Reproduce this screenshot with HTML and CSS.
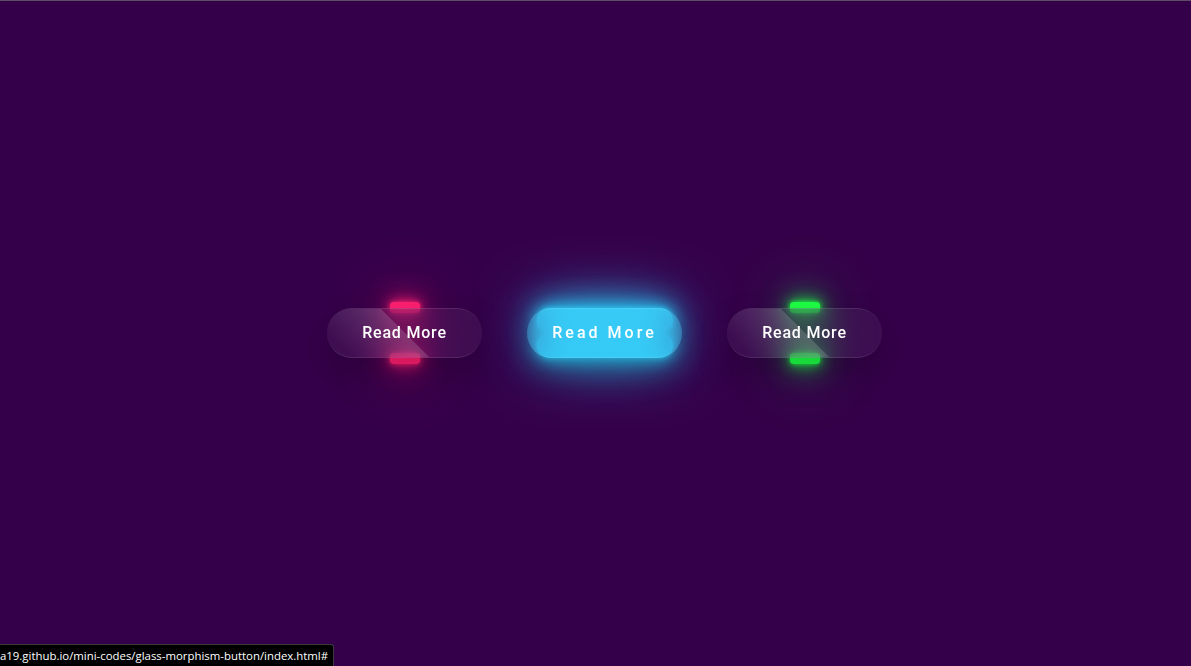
FILE: index.html
```html
<!DOCTYPE html>
<html lang="en">
<head>
<meta charset="utf-8">
<title>Glass Morphism Button</title>
<link rel="stylesheet" href="styles.css">
</head>
<body>
<main class="stage">
  <div class="btn btn-pink"><a href="#" class="btn-link">Read More</a></div>
  <div class="btn btn-blue is-hover"><a href="#" class="btn-link">Read More</a></div>
  <div class="btn btn-green"><a href="#" class="btn-link">Read More</a></div>
</main>
<div class="status">a19.github.io/mini-codes/glass-morphism-button/index.html#</div>
</body>
</html>
```
FILE: styles.css
```css
* { box-sizing: border-box; margin: 0; padding: 0; }
html, body { height: 100%; }
body {
  background: #35004a;
  box-shadow: inset 0 1px 0 #5e4b66;
  font-family: Roboto, "Liberation Sans", sans-serif;
  overflow: hidden;
}
.stage {
  height: 100%;
  display: flex;
  justify-content: center;
  align-items: center;
  gap: 45px;
  padding-left: 18px;
  padding-bottom: 1px;
}
.btn {
  position: relative;
  width: 155px;
  height: 50px;
}
.btn-link {
  position: absolute;
  inset: 0;
  display: flex;
  justify-content: center;
  align-items: center;
  background: rgba(255,255,255,0.05);
  box-shadow: 0 15px 35px rgba(0,0,0,0.2);
  border-top: 1px solid rgba(255,255,255,0.1);
  border-bottom: 1px solid rgba(255,255,255,0.1);
  border-radius: 30px;
  color: #fff;
  z-index: 1;
  font-size: 16px;
  font-weight: 500;
  letter-spacing: 0.8px;
  text-decoration: none;
  overflow: hidden;
  backdrop-filter: blur(15px);
}
.btn-link::before {
  content: '';
  position: absolute;
  top: 0;
  left: 0;
  width: 50%;
  height: 100%;
  background: linear-gradient(to left, rgba(255,255,255,0.15), transparent);
  transform: skewX(45deg) translateX(0);
}
.btn::before, .btn::after {
  content: '';
  position: absolute;
  left: 50%;
  transform: translateX(-50%);
  width: 30px;
  height: 11px;
  border-radius: 4px;
}
.btn::before { bottom: -6px; }
.btn::after { top: -6px; }

.btn-pink::before, .btn-pink::after {
  background: #ff1f71;
  box-shadow: 0 0 5px #ff1f71, 0 0 15px #ff1f71, 0 0 30px #ff1f71, 0 0 60px #ff1f71;
}
.btn-green::before, .btn-green::after {
  background: #1eff45;
  box-shadow: 0 0 5px #1eff45, 0 0 15px #1eff45, 0 0 30px #1eff45, 0 0 60px #1eff45;
}
.btn-blue::before, .btn-blue::after {
  background: #2ec8f6;
  box-shadow: 0 0 5px #2ec8f6, 0 0 15px #2ec8f6, 0 0 30px #2ec8f6, 0 0 60px #2ec8f6;
}
.is-hover::before { bottom: 0; height: 50%; width: 88%; border-radius: 30px; }
.is-hover::after { top: 0; height: 50%; width: 88%; border-radius: 30px; }
.is-hover .btn-link { letter-spacing: 3px; }
.is-hover .btn-link::before { transform: skewX(45deg) translateX(200px); }

.status {
  position: fixed;
  left: 0;
  bottom: 0;
  height: 22px;
  padding: 3px 5px 0 0;
  background: #000;
  border: 1px solid #3a3a3a;
  border-left: none;
  border-bottom: none;
  border-top-right-radius: 3px;
  color: #fff;
  font-family: "Open Sans", "Liberation Sans", sans-serif;
  font-size: 11.4px;
  line-height: 16px;
  white-space: nowrap;
  z-index: 5;
}
```
